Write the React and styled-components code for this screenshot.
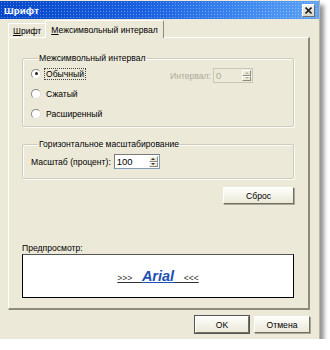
import React from "react";
import styled, { createGlobalStyle } from "styled-components";

const GlobalStyle = createGlobalStyle`
  html, body {
    margin: 0;
    padding: 0;
    background: #ffffff;
  }
  body {
    font-family: "Liberation Sans", "DejaVu Sans", Arial, sans-serif;
    font-size: 8.6px;
    color: #000;
  }
`;

const Dialog = styled.div`
  width: 320px;
  height: 339px;
  background: #ece9d8;
  box-shadow: 4px 5px 4px rgba(60, 60, 60, 0.55);
  border-right: 1px solid #b8b5a6;
  display: flex;
  flex-direction: column;
  box-sizing: border-box;
`;

const TitleBar = styled.div`
  height: 18px;
  margin-top: 1px;
  padding: 0 4px 0 4px;
  display: flex;
  align-items: center;
  justify-content: space-between;
  background:
    radial-gradient(circle, rgba(255, 255, 255, 0.35) 0.6px, transparent 0.8px) 0 0 / 3px 3px,
    linear-gradient(to right, #0646c9 0%, #1a60e0 45%, #3c86ef 75%, #5ea2f6 100%);
`;

const Title = styled.span`
  color: #fff;
  font-weight: bold;
  font-size: 9.5px;
  letter-spacing: 0.2px;
`;

const CloseButton = styled.div`
  width: 11px;
  height: 11px;
  background: linear-gradient(#f4f3ee, #d9d6c8);
  border: 1px solid #fff;
  border-right-color: #6d6d6d;
  border-bottom-color: #6d6d6d;
  display: flex;
  align-items: center;
  justify-content: center;
`;

const Body = styled.div`
  flex: 1;
  display: flex;
  flex-direction: column;
  padding: 1px 9px 0 8px;
`;

const TabList = styled.div`
  display: flex;
  align-items: flex-end;
  height: 18px;
  position: relative;
  z-index: 1;
  margin-bottom: -1px;
`;

const Tab = styled.div`
  height: ${(p) => (p.$active ? "18px" : "15px")};
  padding: 0 ${(p) => (p.$active ? "5px" : "4px")};
  padding-top: ${(p) => (p.$active ? "0" : "1px")};
  display: flex;
  align-items: center;
  box-sizing: border-box;
  background: #ece9d8;
  border: 1px solid #fff;
  border-bottom: ${(p) => (p.$active ? "none" : "1px solid #fff")};
  border-right-color: #8d8a7e;
  border-radius: 2px 2px 0 0;
  margin-left: ${(p) => (p.$active ? "-1px" : "0")};
  font-size: 8.6px;
`;

const Underlined = styled.span`
  text-decoration: underline;
`;

const Panel = styled.div`
  height: 273px;
  border: 1px solid #fff;
  border-right: 2px solid #8d8a7e;
  border-bottom: 2px solid #8d8a7e;
  box-sizing: border-box;
  padding: 15px 14px 0 13px;
  display: flex;
  flex-direction: column;
`;

const GroupBox = styled.fieldset`
  margin: 0;
  padding: ${(p) => p.$pad};
  height: ${(p) => p.$h};
  box-sizing: border-box;
  border: 1px solid #cfccbd;
  border-radius: 2px;
  box-shadow: inset 1px 1px 0 #fbfbf8, 1px 1px 0 #fbfbf8;
  margin-bottom: ${(p) => p.$mb || "0"};
`;

const Legend = styled.legend`
  padding: 0 1px;
  margin-left: 7px;
  line-height: 10px;
`;

const SpacingRow = styled.div`
  display: flex;
  justify-content: space-between;
  align-items: flex-start;
`;

const RadioList = styled.div`
  display: flex;
  flex-direction: column;
  gap: 7px;
`;

const RadioItem = styled.label`
  display: flex;
  align-items: center;
  gap: 4px;
  height: 13px;
`;

const RadioCircle = styled.span`
  width: 8px;
  height: 8px;
  border-radius: 50%;
  border: 1px solid #8a8a8a;
  border-right-color: #e0e0e0;
  border-bottom-color: #e0e0e0;
  background: #fff;
  display: flex;
  align-items: center;
  justify-content: center;
  box-sizing: content-box;
  &::after {
    content: "";
    width: 3px;
    height: 3px;
    border-radius: 50%;
    background: ${(p) => (p.$checked ? "#222" : "transparent")};
  }
`;

const RadioText = styled.span`
  padding: 0 1px;
  outline: ${(p) => (p.$focus ? "1px dotted #444" : "none")};
`;

const SpinField = styled.div`
  display: flex;
  align-items: center;
  gap: 2px;
  color: ${(p) => (p.$disabled ? "#aca899" : "#000")};
  margin: 1px 32px 0 0;
`;

const SpinBox = styled.div`
  width: ${(p) => p.$w};
  height: 15px;
  box-sizing: border-box;
  border: 1px solid ${(p) => (p.$disabled ? "#c9c7ba" : "#7f9db9")};
  border-top-color: ${(p) => (p.$disabled ? "#c9c7ba" : "#7a7a7a")};
  border-left-color: ${(p) => (p.$disabled ? "#c9c7ba" : "#7a7a7a")};
  background: ${(p) => (p.$disabled ? "#ece9d8" : "#fff")};
  display: flex;
  align-items: stretch;
`;

const SpinValue = styled.span`
  flex: 1;
  padding-left: 2px;
  line-height: 13px;
  font-size: 9.5px;
  color: ${(p) => (p.$disabled ? "#aca899" : "#000")};
`;

const SpinButtons = styled.div`
  width: 9px;
  display: flex;
  flex-direction: column;
  margin: 1px;
`;

const SpinArrow = styled.div`
  flex: 1;
  background: #ece9d8;
  border: 1px solid #fff;
  border-right-color: #8d8a7e;
  border-bottom-color: #8d8a7e;
  display: flex;
  align-items: center;
  justify-content: center;
  &::after {
    content: "";
    border-left: 2px solid transparent;
    border-right: 2px solid transparent;
    ${(p) => (p.$up ? "border-bottom" : "border-top")}: 2px solid
      ${(p) => (p.$disabled ? "#b5b2a4" : "#333")};
  }
`;

const ScaleRow = styled.div`
  display: flex;
  align-items: center;
  gap: 3px;
`;

const ButtonRow = styled.div`
  display: flex;
  justify-content: flex-end;
  gap: 5px;
`;

const Button = styled.div`
  width: ${(p) => p.$w};
  height: 17px;
  box-sizing: border-box;
  background: linear-gradient(#fdfdfb, #ece9d8);
  border: 1px solid #fff;
  border-right-color: #716f64;
  border-bottom-color: #716f64;
  box-shadow: ${(p) => (p.$default ? "0 0 0 1px #555" : "1px 1px 0 #aca899")};
  display: flex;
  align-items: center;
  justify-content: center;
`;

const PreviewLabel = styled.div`
  margin-top: 39px;
  margin-bottom: 1px;
  line-height: 10px;
`;

const Preview = styled.div`
  height: 44px;
  box-sizing: border-box;
  border: 1px solid #000;
  border-top-color: #555;
  background: #fff;
  display: flex;
  align-items: center;
  justify-content: center;
`;

const PreviewText = styled.span`
  text-decoration: underline;
  color: #333;
  white-space: pre;
  display: flex;
  align-items: baseline;
`;

const FontName = styled.span`
  font-weight: bold;
  font-style: italic;
  font-size: 14.5px;
  color: #1c4fb5;
  text-decoration: underline;
`;

const Footer = styled.div`
  padding-top: 6px;
`;

function Spin({ value, width, disabled }) {
  return (
    <SpinBox $w={width} $disabled={disabled}>
      <SpinValue $disabled={disabled}>{value}</SpinValue>
      <SpinButtons>
        <SpinArrow $up $disabled={disabled} />
        <SpinArrow $disabled={disabled} />
      </SpinButtons>
    </SpinBox>
  );
}

export default function App() {
  return (
    <>
      <GlobalStyle />
      <Dialog>
        <TitleBar>
          <Title>Шрифт</Title>
          <CloseButton>
            <svg width="7" height="7" viewBox="0 0 7 7">
              <path d="M0.5 0.5 L6.5 6.5 M6.5 0.5 L0.5 6.5" stroke="#222" strokeWidth="1.6" />
            </svg>
          </CloseButton>
        </TitleBar>
        <Body>
          <TabList>
            <Tab>
              <span>
                <Underlined>Ш</Underlined>рифт
              </span>
            </Tab>
            <Tab $active>
              <span>
                <Underlined>М</Underlined>ежсимвольный интервал
              </span>
            </Tab>
          </TabList>
          <Panel>
            <GroupBox $pad="4px 8px 0 8px" $h="74px" $mb="12px">
              <Legend>Межсимвольный интервал</Legend>
              <SpacingRow>
                <RadioList>
                  <RadioItem>
                    <RadioCircle $checked />
                    <RadioText $focus>Обычный</RadioText>
                  </RadioItem>
                  <RadioItem>
                    <RadioCircle />
                    <RadioText>Сжатый</RadioText>
                  </RadioItem>
                  <RadioItem>
                    <RadioCircle />
                    <RadioText>Расширенный</RadioText>
                  </RadioItem>
                </RadioList>
                <SpinField $disabled>
                  <span>Интервал:</span>
                  <Spin value="0" width="40px" disabled />
                </SpinField>
              </SpacingRow>
            </GroupBox>
            <GroupBox $pad="5px 8px 0 8px" $h="40px" $mb="8px">
              <Legend>Горизонтальное масштабирование</Legend>
              <ScaleRow>
                <span>Масштаб (процент):</span>
                <Spin value="100" width="46px" />
              </ScaleRow>
            </GroupBox>
            <ButtonRow>
              <Button $w="71px">Сброс</Button>
            </ButtonRow>
            <PreviewLabel>Предпросмотр:</PreviewLabel>
            <Preview>
              <PreviewText>
                {">>>    "}
                <FontName>Arial</FontName>
                {"    <<<"}
              </PreviewText>
            </Preview>
          </Panel>
          <Footer>
            <ButtonRow>
              <Button $w="54px" $default>
                OK
              </Button>
              <Button $w="56px">Отмена</Button>
            </ButtonRow>
          </Footer>
        </Body>
      </Dialog>
    </>
  );
}
